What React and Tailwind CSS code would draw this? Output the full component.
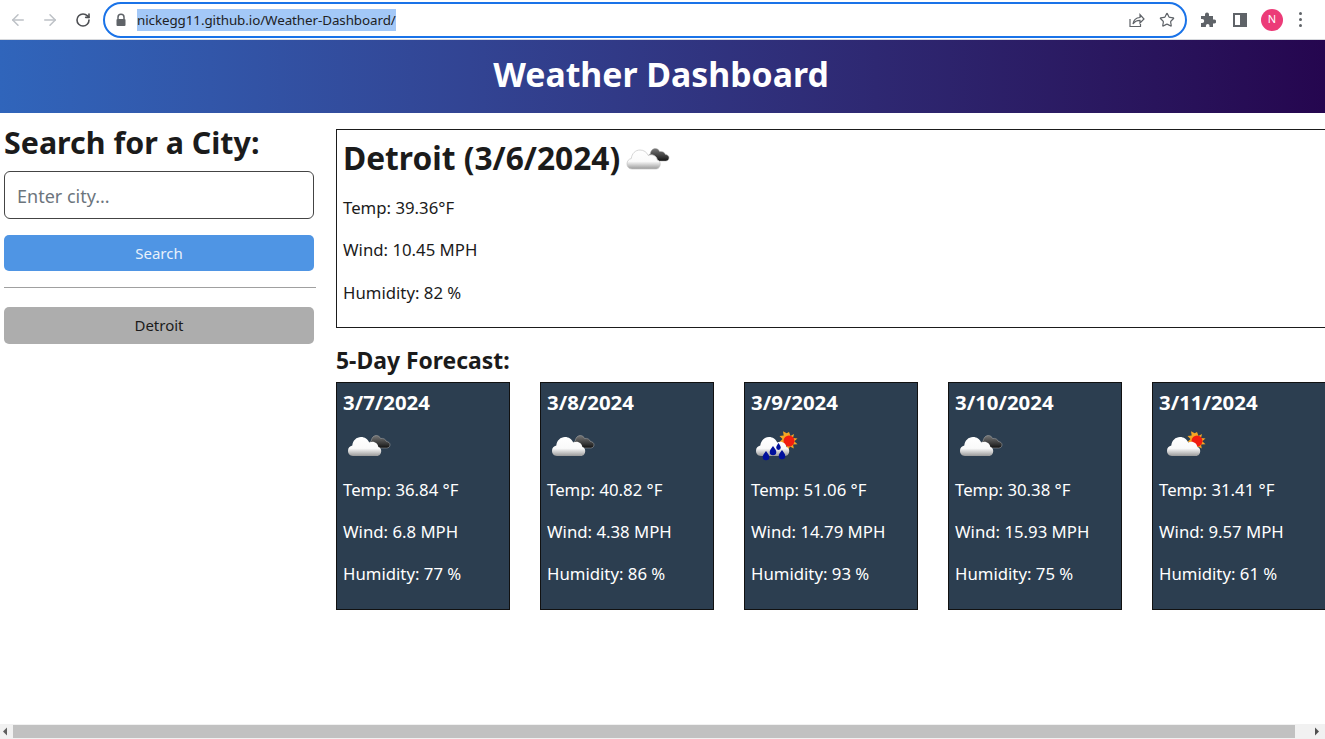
import { ArrowLeft, ArrowRight, RotateCw, Star } from "lucide-react";

const forecast = [
  { date: "3/7/2024", icon: "overcast", temp: "36.84", wind: "6.8", humidity: 77 },
  { date: "3/8/2024", icon: "overcast", temp: "40.82", wind: "4.38", humidity: 86 },
  { date: "3/9/2024", icon: "rain", temp: "51.06", wind: "14.79", humidity: 93 },
  { date: "3/10/2024", icon: "overcast", temp: "30.38", wind: "15.93", humidity: 75 },
  { date: "3/11/2024", icon: "sun", temp: "31.41", wind: "9.57", humidity: 61 },
];

const cloudPath =
  "M10 36c-3.500 0-5-2.600-5-5.200 0-2.800 1.800-4.800 4.300-5.300C9.800 20.500 13.500 17 18 17c3.800 0 6.800 2.200 8.200 5.400 1-.4 2-.6 3-.6 3.400 0 5.800 2.400 6.200 5.200 1.800.5 2.800 2 2.800 4 0 2.800-1.600 5-4.400 5z";

function WeatherIcon({ kind, id, x = 0, edge }) {
  return (
    <svg width="50" height="50" viewBox="0 0 50 50" className="block">
      <defs>
        <linearGradient id={`${id}-white`} x1="0" y1="0" x2="0" y2="1">
          <stop offset="0" stopColor="#ffffff" />
          <stop offset="0.6" stopColor="#fafafa" />
          <stop offset="1" stopColor="#9a9a9a" />
        </linearGradient>
        <linearGradient id={`${id}-dark`} x1="0" y1="0" x2="0" y2="1">
          <stop offset="0" stopColor="#777777" />
          <stop offset="0.7" stopColor="#333333" />
          <stop offset="1" stopColor="#111111" />
        </linearGradient>
      </defs>
      {kind === "overcast" && (
        <path
          d="M30 28c-2.500 0-4-1.600-4-3.600 0-1.800 1-3 2.300-3.500.3-3.200 2.400-5.400 5-5.400 2 0 3.500 1.200 4.300 3 2.600-.5 5 .6 5.800 3 2 .2 3.600 1.400 3.600 3.300 0 2-1.400 3.200-3.400 3.200z"
          fill={`url(#${id}-dark)`}
          stroke="#aaaaaa"
          strokeWidth="0.5"
        />
      )}
      {kind !== "overcast" && (
        <g>
          <path
            d="M38 12l1.500 4 3.500-2-1 4 4.500.5-3.300 2.800 3.300 3-4.500.3.800 4-3.800-2-2 3.500-1.500-4-4 1.500 1-4.500-4-1 3-3-3-3 4.200-.5-.7-4.300 3.700 2z"
            fill="#f5a623"
          />
          <circle cx="38" cy="21" r="5.500" fill="#f01d10" />
        </g>
      )}
      <g transform={`translate(${x} 0)`}>
        <path
          d={cloudPath}
          fill={`url(#${id}-white)`}
          stroke={edge ? "#c4c4c4" : "none"}
          strokeWidth="0.7"
        />
      </g>
      {kind === "rain" && (
        <g fill="#00109c">
          <path d="M15 31c2.200 3 3.300 4.500 3.300 6a3.300 3.300 0 0 1-6.600 0c0-1.500 1.100-3 3.300-6z" />
          <path d="M22 26c2.200 3 3.300 4.500 3.300 6a3.300 3.300 0 0 1-6.600 0c0-1.500 1.100-3 3.300-6z" />
          <path d="M27.500 23c1.500 2.500 2.300 3.500 2.300 4.600a2.300 2.300 0 0 1-4.600 0c0-1.100.8-2.100 2.300-4.600z" />
          <path d="M31 30c2.200 3 3.300 4.500 3.300 6a3.300 3.300 0 0 1-6.600 0c0-1.500 1.100-3 3.300-6z" />
        </g>
      )}
    </svg>
  );
}

function BrowserBar() {
  return (
    <div className="flex h-10 shrink-0 items-center border-b border-[#d6d8dc] bg-white text-[#5f6368]">
      <ArrowLeft className="ml-[9px] size-[18px] text-[#bdc1c6]" strokeWidth={2} />
      <ArrowRight className="ml-[14px] size-[18px] text-[#bdc1c6]" strokeWidth={2} />
      <RotateCw className="ml-[16px] size-[16px] text-[#4d4f53]" strokeWidth={2.4} />
      <div className="ml-[12px] flex h-[36px] w-[1084px] items-center rounded-full border-2 border-[#1a73e8] bg-white">
        <svg width="12" height="14" viewBox="0 0 12 14" className="ml-[10px]">
          <path d="M3 6V4.200a3 3 0 0 1 6 0V6" fill="none" stroke="#5f6368" strokeWidth="1.500" />
          <rect x="1.500" y="6" width="9" height="7" rx="1" fill="#5f6368" />
        </svg>
        <span className="ml-[10px] bg-[#a3c8f7] text-[13.4px] leading-[22px] tracking-[-0.08px] text-[#202124]">
          nickegg11.github.io/Weather-Dashboard/
        </span>
        <svg width="18" height="18" viewBox="0 0 18 18" className="ml-auto" fill="none" stroke="#5f6368" strokeWidth="1.200">
          <path d="M3 8v7.500h10.500V13" />
          <path d="M6 13c.5-4 3-6.300 7-6.500V3.500l4 4.500-4 4V9.300C9.800 9.300 7.500 10.500 6 13z" />
        </svg>
        <Star className="ml-[14px] mr-[10px] size-[16px] text-[#5f6368]" strokeWidth={1.8} />
      </div>
      <svg width="16" height="16" viewBox="0 0 16 16" className="ml-[13px]" fill="#5f6368">
        <path d="M5 2.500a2 2 0 0 1 4 0V4h4v3.500h1.200a2 2 0 0 1 0 4H13V15H9.500v-1.200a1.800 1.800 0 0 0-3.600 0V15H1v-4h1.200a2 2 0 0 0 0-4H1V4h4z" />
      </svg>
      <div className="ml-[17px] flex h-[14px] w-[14px] justify-end border-2 border-[#5f6368]">
        <div className="h-full w-[5px] bg-[#5f6368]" />
      </div>
      <div className="ml-[14px] flex size-[22px] items-center justify-center rounded-full bg-[#ec3b78] text-[11px] text-white">
        N
      </div>
      <div className="ml-[16px] flex flex-col gap-[3px]">
        <div className="size-[3px] rounded-full bg-[#5f6368]" />
        <div className="size-[3px] rounded-full bg-[#5f6368]" />
        <div className="size-[3px] rounded-full bg-[#5f6368]" />
      </div>
    </div>
  );
}

function Scrollbar() {
  return (
    <div className="flex h-[15px] shrink-0 items-center bg-[#f1f1f1]">
      <svg width="13" height="15" viewBox="0 0 13 15" fill="#5f5f5f">
        <path d="M3 7.500 7 3.500v8z" />
      </svg>
      <div className="h-[13px] w-[1282px] bg-[#c1c1c1]" />
      <svg width="30" height="15" viewBox="0 0 30 15" fill="#505050">
        <path d="M20 3.500 24 7.500l-4 4z" />
      </svg>
    </div>
  );
}

export default function App() {
  return (
    <div className="flex h-[739px] w-full flex-col overflow-hidden bg-white font-['Noto_Sans',sans-serif] text-[#1b1b1b]">
      <BrowserBar />
      <header className="flex h-[73px] shrink-0 items-center justify-center bg-linear-to-r from-[#3065bb] to-[#25064f] pr-[3px] pb-[4px]">
        <h1 className="text-[33.8px] font-bold text-white">Weather Dashboard</h1>
      </header>

      <main className="flex flex-1 overflow-hidden pt-[14px]">
        <aside className="ml-1 w-[312px] shrink-0">
          <h2 className="pt-px text-[30.4px] leading-[30px] font-bold">Search for a City:</h2>
          <input
            type="text"
            placeholder="Enter city..."
            className="mt-[13px] h-[48px] w-[310px] rounded-md border border-[#444444] px-3 pt-[2px] text-[18px] placeholder:text-[#6c757d]"
          />
          <button
            type="button"
            className="mt-4 h-9 w-[310px] rounded-[5px] bg-[#4f95e4] text-[15px] text-[#e8f1fb]"
          >
            Search
          </button>
          <hr className="mt-4 border-t-[1.5px] border-[#a0a0a0]" />
          <button
            type="button"
            className="mt-[19px] h-[37px] w-[310px] rounded-[5px] bg-[#adadad] text-[15px]"
          >
            Detroit
          </button>
        </aside>

        <section className="ml-5 mt-[2px] min-w-0 flex-1">
          <div className="h-[199px] w-[1040px] border border-[#1b1b1b] px-[6px] pt-[6px]">
            <h2 className="flex h-[44px] items-center text-[31.7px] font-bold whitespace-nowrap">
              Detroit (3/6/2024)
              <span className="ml-[2px] block h-[50px] w-[50px]">
                <WeatherIcon kind="overcast" id="hero" edge />
              </span>
            </h2>
            <p className="mt-[16px] text-[16.75px] leading-[24px]">Temp: 39.36°F</p>
            <p className="mt-[18px] text-[16.75px] leading-[24px]">Wind: 10.45 MPH</p>
            <p className="mt-[19px] text-[16.75px] leading-[24px]">Humidity: 82 %</p>
          </div>

          <h3 className="mt-[19px] text-[22.9px] leading-[28px] font-bold">5-Day Forecast:</h3>

          <div className="mt-[7px] flex gap-[30px]">
            {forecast.map((day, i) => (
              <article
                key={day.date}
                className="h-[228px] w-[174px] shrink-0 border border-[#111111] bg-[#2c3e50] px-[6px] pt-[6px] text-white"
              >
                <h4 className="text-[20.4px] leading-[26px] font-bold">{day.date}</h4>
                <div className="mt-[5px] h-[50px]">
                  <WeatherIcon kind={day.icon} id={`day-${i}`} x={day.icon === "sun" ? 3 : 0} />
                </div>
                <p className="mt-[8px] text-[16.75px] leading-[24px]">Temp: {day.temp} °F</p>
                <p className="mt-[18px] text-[16.75px] leading-[24px]">Wind: {day.wind} MPH</p>
                <p className="mt-[18px] text-[16.75px] leading-[24px]">Humidity: {day.humidity} %</p>
              </article>
            ))}
          </div>
        </section>
      </main>

      <Scrollbar />
    </div>
  );
}
